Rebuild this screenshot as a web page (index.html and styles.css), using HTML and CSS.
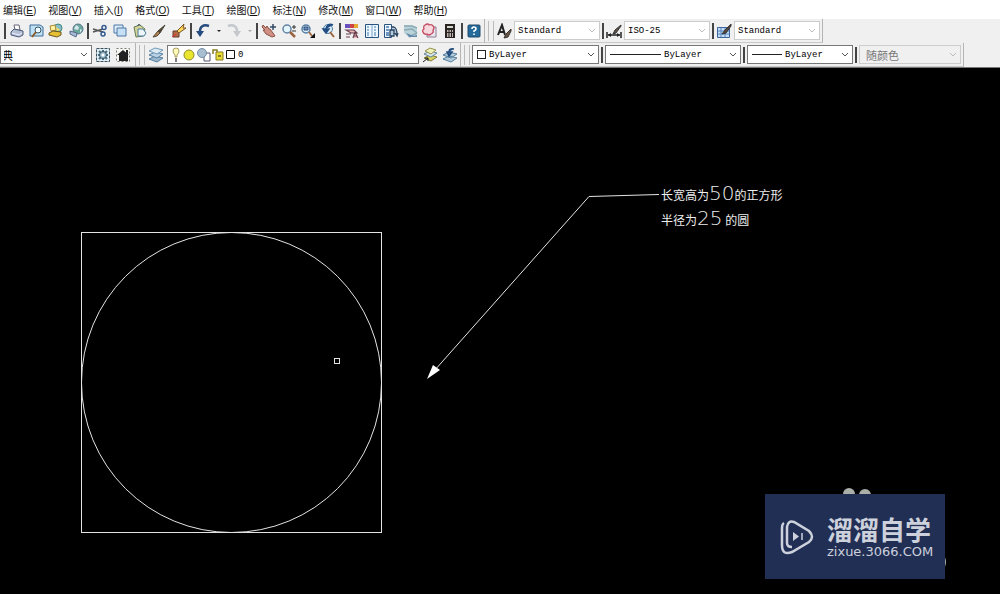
FILE: index.html
```html
<!DOCTYPE html>
<html lang="zh-CN">
<head>
<meta charset="utf-8">
<title>CAD</title>
<link rel="stylesheet" href="styles.css">
</head>
<body>
<nav class="menu">
<button>编辑(<u>E</u>)</button>
<button>视图(<u>V</u>)</button>
<button>插入(<u>I</u>)</button>
<button>格式(<u>O</u>)</button>
<button>工具(<u>T</u>)</button>
<button>绘图(<u>D</u>)</button>
<button>标注(<u>N</u>)</button>
<button>修改(<u>M</u>)</button>
<button>窗口(<u>W</u>)</button>
<button>帮助(<u>H</u>)</button>
</nav>

<div class="row">
<div class="bar bar-standard">
<i class="sep"></i>
<div class="tools">
<button aria-label="打印"><svg viewBox="0 0 16 16"><path d="M5 2h5l1 5H6z" fill="#fff" stroke="#667" /><path d="M2 9l3-3 9 2v4l-4 2-8-2z" fill="#b4bfd4" stroke="#4a5878"/><path d="M3 10l7 2 3-2" fill="none" stroke="#eef"/></svg></button>
<button aria-label="打印预览"><svg viewBox="0 0 16 16"><path d="M1 2h10l3 2v9H1z" fill="#bfe0f2" stroke="#3c6c9a"/><circle cx="9" cy="7" r="3" fill="#eef8ff" stroke="#356"/><path d="M7 9l-4 5" stroke="#8a5a2a" stroke-width="2"/></svg></button>
<button aria-label="发布"><svg viewBox="0 0 16 16"><circle cx="10" cy="5" r="4" fill="#86bccb" stroke="#487"/><path d="M2 3l5-1 1 5-5 1z" fill="#fff1a0" stroke="#a83"/><path d="M1 10l4-2 8 1v3l-4 2-8-2z" fill="#e6bf35" stroke="#67551e"/><path d="M8 4l4 3-3 1" fill="#ffe451"/></svg></button>
<button aria-label="三维打印"><svg viewBox="0 0 16 16"><circle cx="10" cy="6" r="5" fill="#6aa89b" stroke="#59778c"/><path d="M8 2l3 2-1 3-4-1zm4 4l2 1-2 3z" fill="#d6e8ed"/><path d="M2 8l7 2-1 4-6-3z" fill="#a9bad2" stroke="#536b8e"/></svg></button>
</div>
<i class="sep"></i>
<div class="tools tools-edit">
<button aria-label="剪切"><svg viewBox="0 0 16 16"><path d="M1 6l10 3M1 9l10-3" stroke="#555" stroke-width="1.5"/><circle cx="12" cy="4.500" r="2" fill="none" stroke="#345b91" stroke-width="1.500"/><circle cx="11" cy="11" r="2" fill="none" stroke="#345b91" stroke-width="1.500"/></svg></button>
<button aria-label="复制"><svg viewBox="0 0 16 16"><path d="M2 2h9v8H2z" fill="#ddebf7" stroke="#4c79a8"/><path d="M5 5h9v8H5z" fill="#c5e0f4" stroke="#4c79a8"/></svg></button>
<button aria-label="粘贴"><svg viewBox="0 0 16 16"><path d="M2 4l6-2 5 4-2 7-7 1z" fill="#d5d497" stroke="#607b55"/><path d="M6 6l5 0 3 4-2 3H6z" fill="#edf6fc" stroke="#497b98"/><path d="M5 3l2-2 2 2" fill="none" stroke="#567"/></svg></button>
<button aria-label="特性匹配"><svg viewBox="0 0 16 16"><path d="M14 2L7 8l2 2z" fill="#554337" stroke="#443"/><path d="M7 8l2 2-3 3-4 1z" fill="#b28251" stroke="#543"/></svg></button>
<button aria-label="块编辑器"><svg viewBox="0 0 16 16"><path d="M2 8h6v6H2z" fill="#b46a44" stroke="#653d31"/><path d="M6 8l7-7-1 4 3 0-7 5z" fill="#ffd75b" stroke="#7c5425"/><path d="M1 14l4-3" stroke="#d33"/></svg></button>
</div>
<i class="sep"></i>
<div class="tools tools-undo">
<button aria-label="放弃"><svg viewBox="0 0 16 16"><path d="M14 3C8 1 5 4 5 8" fill="none" stroke="#264b7e" stroke-width="2.500"/><path d="M1 8h8l-4 6z" fill="#264b7e"/></svg></button>
<button class="drop" aria-label="放弃列表"><svg viewBox="0 0 6 16"><path d="M1 7h4l-2 2z" fill="#222"/></svg></button>
<button aria-label="重做"><svg viewBox="0 0 16 16"><path d="M2 3c6-2 9 1 9 5" fill="none" stroke="#c4c8cc" stroke-width="2.500"/><path d="M7 8h8l-4 6z" fill="#c4c8cc"/></svg></button>
<button class="drop" aria-label="重做列表"><svg viewBox="0 0 6 16"><path d="M1 7h4l-2 2z" fill="#aaa"/></svg></button>
</div>
<i class="sep"></i>
<div class="tools">
<button aria-label="实时平移"><svg viewBox="0 0 16 16"><path d="M1 4l1-2 3 3 1-2 2 3 1 0 3 4 2 3-3 1-6-3-3-4 2 0z" fill="#cf8f82" stroke="#8d5148"/><path d="M12 1v6M9 4h6" stroke="#354964" stroke-width="1.500"/></svg></button>
<button aria-label="实时缩放"><svg viewBox="0 0 16 16"><circle cx="6" cy="6" r="4" fill="#e4f5fc" stroke="#6483a2" stroke-width="1.500"/><path d="M9 9l5 5" stroke="#9b6540" stroke-width="2.500"/><path d="M13 2v4M11 4h4M11 8h4" stroke="#333"/></svg></button>
<button aria-label="窗口缩放"><svg viewBox="0 0 16 16"><circle cx="6" cy="6" r="4" fill="#dceffa" stroke="#557da4" stroke-width="1.500"/><path d="M4 4h4v3H4z" fill="#7490b9" stroke="#254b76"/><path d="M9 9l3 4" stroke="#a56d43" stroke-width="2"/><path d="M15 10v5h-5z" fill="#111"/></svg></button>
<button aria-label="缩放上一个"><svg viewBox="0 0 16 16"><circle cx="8" cy="6" r="4.500" fill="#dceffa" stroke="#557da4"/><path d="M13 2C9 0 6 3 6 6M3 6h6l-3 4z" stroke="#234e84" stroke-width="1.500" fill="#234e84"/><path d="M10 9l4 5" stroke="#9a613b" stroke-width="2"/></svg></button>
</div>
<i class="sep"></i>
<div class="tools tools-palettes">
<button aria-label="特性"><svg viewBox="0 0 16 16"><path d="M1 1h5v4H1z" fill="#6b4fbe"/><path d="M6 1h4v4H6z" fill="#d04444"/><path d="M10 1h4v4h-4z" fill="#e5aa32"/><path d="M2 7h8l3 3H7zM2 11h5M2 14h4M9 15l2-6 3 6M10 13h3" fill="#e7b9b9" stroke="#693f4e" stroke-width="1.200"/></svg></button>
<button aria-label="设计中心"><svg viewBox="0 0 16 16"><path d="M1.500 1.500h13v13h-13z" fill="#edf7ff" stroke="#28527f"/><path d="M8 2v12" stroke="#7da0c4"/><path d="M3 4h3M10 4h3M3 7h3M10 7h3M3 10h3M10 10h3M3 12h3M10 12h3" stroke="#447ab0" stroke-width="1.200" stroke-dasharray="2 1"/></svg></button>
<button aria-label="工具选项板"><svg viewBox="0 0 16 16"><path d="M1.500 1.500h7v13h-7z" fill="#edf7ff" stroke="#28527f"/><path d="M3 4h3M3 7h3M3 10h3M3 12h3" stroke="#447ab0" stroke-width="1.500"/><path d="M8 4h3q3 1 3 8M12 10l2 3 1-3M7 7h4v6H7z" fill="#b9cde2" stroke="#29435f" stroke-width="1.300"/></svg></button>
<button aria-label="图纸集"><svg viewBox="0 0 16 16"><path d="M1 2h8l5 3v9H6L1 10z" fill="#bad3d8"/><path d="M1 3h8l5 2M1 7l8-1 5 4M6 14l8-4" fill="none" stroke="#8aabb5" stroke-width="1.500"/><path d="M3 10l8 3 3-1v2H6z" fill="#648bae"/></svg></button>
<button aria-label="标记集"><svg viewBox="0 0 16 16"><path d="M5 4h9v10H5z" fill="#e9e8f0" stroke="#8c7e92"/><path d="M3 2q3-2 4 0 3-1 4 1 2 2 0 4 1 3-2 4-2 2-4 0-3 1-4-2-1-2 1-3-1-3 1-4z" fill="#f6d9df" stroke="#c34b62" stroke-width="1.300"/></svg></button>
<button aria-label="计算器"><svg viewBox="0 0 16 16"><path d="M3 1h10v14H3z" fill="#292321"/><path d="M5 3h6v2H5z" fill="#d3d9ca"/><path d="M5 8h6M5 11h6M5 13h6" stroke="#ede6dc" stroke-width="1.500" stroke-dasharray="1.500 1"/></svg></button>
</div>
<i class="sep"></i>
<div class="tools tools-one">
<button aria-label="帮助"><svg viewBox="0 0 16 16"><rect x="2" y="2" width="12" height="12" rx="1" fill="#246b9c" stroke="#234a6b"/><path d="M6 6q0-2 2-2t2 2q0 1-2 2v1M8 10.500v1.500" fill="none" stroke="#fff" stroke-width="1.600"/></svg></button>
</div>
</div>
<div class="bar bar-tight">
<i class="grip"></i>
<button aria-label="文字样式"><svg viewBox="0 0 16 16"><path d="M2 12L6 2l3 10M3 9h5" fill="none" stroke="#222" stroke-width="2"/><path d="M15 6l-5 5-2 4 4-1 3-6z" fill="#705744" stroke="#333"/></svg></button>
<label class="combo combo-soft w-style"><select aria-label="文字样式"><option>Standard</option></select></label>
<i class="sep"></i>
<button aria-label="标注样式"><svg viewBox="0 0 16 16"><path d="M1 9v6M15 9v6M2 12h12" stroke="#222" stroke-width="1.500"/><path d="M2 12l3-2v4zM14 12l-3-2v4z" fill="#222"/><path d="M15 2L9 7l-2 4 3-1 5-7z" fill="#625348" stroke="#333"/></svg></button>
<label class="combo combo-soft w-style"><select aria-label="标注样式"><option>ISO-25</option></select></label>
<i class="sep"></i>
<button aria-label="表格样式"><svg viewBox="0 0 16 16"><path d="M1.500 4.500h12v10h-12z" fill="#c4dcf6" stroke="#3b659c"/><path d="M2 8h11M2 11h11M5 5v9M9 5v9" stroke="#5683bd"/><path d="M15 1L9 7l-3 4 4-1 5-7z" fill="#59473a" stroke="#333"/></svg></button>
<label class="combo combo-soft w-style"><select aria-label="表格样式"><option>Standard</option></select></label>
</div>
</div>

<div class="row row-second">
<div class="bar bar-workspace">
<label class="combo w-workspace"><select class="cjk" aria-label="工作空间"><option>经典</option></select></label>
<div class="tools tools-two">
<button aria-label="工作空间设置"><svg viewBox="0 0 16 16"><path d="M1.500 1.500h13v13h-13z" fill="#e2eef2" stroke="#354f5f" stroke-dasharray="3 1"/><path d="M8 3v10M3 8h10M4 4l8 8M12 4l-8 8" stroke="#476c80" stroke-width="2"/><circle cx="8" cy="8" r="3.500" fill="#9ebccb" stroke="#355366"/><circle cx="8" cy="8" r="1.500" fill="#fff"/></svg></button>
<button aria-label="我的工作空间"><svg viewBox="0 0 16 16"><path d="M1.500 1.500h13v13h-13z" fill="#f6f6f2" stroke="#77796f" stroke-dasharray="2 2"/><path d="M2 8l6-5 6 5h-1v6H4V8z" fill="#222"/><path d="M11 3h2v4h-2z" fill="#222"/></svg></button>
</div>
</div>
<div class="bar">
<i class="grip"></i>
<button aria-label="图层特性"><svg viewBox="0 0 16 16"><path d="M1 12l6-3 8 2-6 4z" fill="#9bb7cd" stroke="#567f9f"/><path d="M1 8l6-3 8 2-6 4z" fill="#b9d1e2" stroke="#567f9f"/><path d="M1 4l6-3 8 2-6 4z" fill="#dcebf4" stroke="#7199b5"/></svg></button>
<label class="combo w-layers">
<svg class="layer-state" viewBox="0 0 64 16"><path d="M4 10V8Q2 6 2 4q0-3 3-3t3 3q0 2-2 4v2z" fill="#fff9b8" stroke="#a79c61"/><path d="M4 12h2M4 14h2" stroke="#555" stroke-width="1.500"/><circle cx="18" cy="8" r="5" fill="#e9e52f" stroke="#908b2c"/><path d="M33 6h6v8h-6z" fill="#fff" stroke="#557"/><circle cx="31" cy="6" r="4.500" fill="#a8bfd1" stroke="#718da7"/><path d="M42 7V3h4v3" fill="none" stroke="#877b24" stroke-width="1.500"/><path d="M45 5h7v8h-7z" fill="#eadd36" stroke="#877b24"/><path d="M47 8h3v2h-3z" fill="#877b24" /><path d="M55.500 3.500h8v8h-8z" fill="#fff" stroke="#111"/></svg>
<select aria-label="图层"><option>0</option></select></label>
<div class="tools tools-two">
<button aria-label="置为当前"><svg viewBox="0 0 16 16"><path d="M2 11l6-3 7 2-6 4z" fill="#d6d362" stroke="#827d35"/><path d="M2 7l6-3 7 2-6 4z" fill="#d7e7ed" stroke="#64849a"/><path d="M3 4l5-3 6 2-5 4z" fill="#eef2ba" stroke="#96934e"/><path d="M1 15l5-4M3 11h3v3" fill="none" stroke="#222"/></svg></button>
<button aria-label="上一个图层"><svg viewBox="0 0 16 16"><path d="M1 12l6-3 8 2-6 4zM1 8l6-3 8 2-6 4z" fill="#b1cbdc" stroke="#567f9f"/><path d="M12 2Q7 1 7 5M5 5h5l-3 4z" fill="#31659a" stroke="#244d7e" stroke-width="1.500"/></svg></button>
</div>
</div>
<div class="bar bar-tight">
<i class="grip"></i>
<label class="combo w-color"><i class="swatch"></i><select aria-label="颜色"><option>ByLayer</option></select></label>
<i class="sep"></i>
<label class="combo w-linetype"><i class="line line-long"></i><select aria-label="线型"><option>ByLayer</option></select></label>
<i class="sep"></i>
<label class="combo w-weight"><i class="line"></i><select aria-label="线宽"><option>ByLayer</option></select></label>
<i class="sep"></i>
<label class="combo combo-soft combo-off w-plot"><select class="cjk" aria-label="打印样式" disabled><option>随颜色</option></select></label>
</div>
</div>

<main class="canvas">
<svg class="drawing" aria-label="图形">
<g fill="none" stroke="#e4e4e4">
<rect x="81.500" y="164.500" width="300" height="300"/>
<circle cx="231.500" cy="314.500" r="150"/>
<rect x="334.500" y="290.500" width="5" height="5"/>
<path d="M659 126.500L589 128.500L434 303"/>
</g>
<path d="M427 311l6-14 7 5z" fill="#fff"/>
<text class="note" x="661" y="132">长宽高为<tspan class="digits">50</tspan>的正方形</text>
<text class="note" x="661" y="157">半径为<tspan class="digits">25</tspan> 的圆</text>
</svg>
<div class="watermark">
<svg class="behind" viewBox="0 0 190 90"><circle cx="84" cy="6" r="6"/><circle cx="100" cy="7" r="6"/><ellipse cx="178" cy="74" rx="3" ry="6"/></svg>
<div class="brand">
<svg class="logo" viewBox="0 0 36 38"><path d="M5 5Q3 6 3 10V27Q3 38 13 34L30 24Q36 19 30 13L15 4Q9 2 8 9V25Q8 29 13 29" fill="none" stroke="#ccd1dc" stroke-width="2.500"/><path d="M14 14l6 4.500-6 4.500z" fill="#ccd1dc"/><path d="M23 15v7" stroke="#ccd1dc" stroke-width="1.500"/></svg>
<div class="brand-text"><strong>溜溜自学</strong><span>zixue.3066.COM</span></div>
</div>
</div>
</main>
</body>
</html>
```
FILE: styles.css
```css
* {
  box-sizing: border-box;
}

body {
  margin: 0;
  min-height: 100vh;
  display: flex;
  flex-direction: column;
  background: #f0f0f0;
  font-family: "Liberation Sans", "Noto Sans CJK SC", sans-serif;
  font-size: 10px;
  color: #111;
  overflow-x: hidden;
}

button {
  padding: 0;
  border: 0;
  background: none;
  color: inherit;
  font: inherit;
  flex: none;
}

.menu {
  display: flex;
  gap: 12px;
  height: 19px;
  padding-left: 3px;
  background: #fff;
  white-space: nowrap;
}

.row {
  display: flex;
  height: 24px;
}

.row-second {
  height: 25px;
  border-bottom: 1px solid #777;
}

.bar {
  display: flex;
  align-items: center;
  gap: 3px;
  flex: none;
  padding-right: 2px;
  border-right: 1px solid #b4b4b4;
  border-bottom: 1px solid #c8c8c8;
}

.bar-tight {
  gap: 2px;
}

.bar-standard {
  padding-left: 4px;
  padding-right: 1px;
}

.bar svg {
  display: block;
  height: 16px;
}

.bar button svg {
  width: 100%;
}

.bar button {
  width: 16px;
  height: 16px;
}

.bar .drop {
  width: 6px;
}

.tools {
  display: flex;
  justify-content: space-between;
  width: 75px;
}

.tools-edit { width: 95px; }
.tools-undo { width: 58px; }
.tools-palettes { width: 114px; }
.tools-one { width: 17px; }
.tools-two { width: 36px; }

.sep {
  width: 2px;
  height: 16px;
  background: #444;
}

.grip {
  width: 6px;
  height: 20px;
  margin-left: 3px;
  border: solid #bbb;
  border-width: 0 1px;
}

.combo {
  display: flex;
  align-items: center;
  height: 19px;
  overflow: hidden;
  background: #fff;
  border: 1px solid #777;
}

.combo-soft {
  border-color: #ccc;
}

.combo select {
  flex: 1;
  min-width: 0;
  height: 100%;
  padding: 0 16px 0 3px;
  border: 0;
  appearance: none;
  color: #000;
  font-family: "Liberation Mono", monospace;
  font-size: 9px;
  background: url("data:image/svg+xml,%3Csvg xmlns='http://www.w3.org/2000/svg' width='8' height='5'%3E%3Cpath d='M1 1l3 3 3-3' fill='none' stroke='%23555'/%3E%3C/svg%3E") no-repeat right 3px center;
}

.combo-soft select {
  background-image: url("data:image/svg+xml,%3Csvg xmlns='http://www.w3.org/2000/svg' width='8' height='5'%3E%3Cpath d='M1 1l3 3 3-3' fill='none' stroke='%23bbb'/%3E%3C/svg%3E");
}

.combo .cjk {
  font-family: "Noto Sans CJK SC", sans-serif;
  font-size: 11px;
}

.combo-off,
.combo-off select.cjk {
  background-color: #f0f0f0;
  color: #777;
  opacity: 1;
}

.combo-off select.cjk {
  padding-left: 6px;
}

.w-style { width: 86px; }
.w-workspace { width: 92px; }
.w-layers { width: 252px; }
.w-color { width: 127px; }
.w-linetype { width: 136px; }
.w-weight { width: 106px; }
.w-plot { width: 102px; }

.w-workspace select {
  text-indent: -13px;
}

.bar-workspace {
  padding-right: 4px;
}

.layer-state {
  width: 64px;
  margin-left: 3px;
}

.swatch {
  width: 9px;
  height: 9px;
  margin-left: 4px;
  border: 1px solid #222;
}

.line {
  width: 30px;
  height: 1px;
  margin-left: 4px;
  background: #222;
}

.line-long {
  width: 51px;
}

.canvas {
  position: relative;
  flex: 1;
  min-height: 500px;
  background: #000;
}

.drawing {
  position: absolute;
  inset: 0;
  width: 100%;
  height: 100%;
}

.note {
  fill: #eee;
  font-family: "Noto Sans CJK SC", sans-serif;
  font-size: 12px;
}

.digits {
  font-family: "DejaVu Sans Light", "DejaVu Sans", sans-serif;
  font-weight: 200;
  font-size: 20px;
}

.watermark {
  position: absolute;
  right: 55px;
  bottom: 15px;
}

.behind {
  position: absolute;
  left: 0;
  top: -6px;
  width: 190px;
  fill: #aab0a8;
}

.brand {
  position: relative;
  display: flex;
  align-items: center;
  gap: 12px;
  width: 180px;
  height: 85px;
  padding-left: 14px;
  background: #222f55;
  color: #ccd1dc;
}

.logo {
  width: 36px;
  height: 38px;
}

.brand-text {
  display: flex;
  flex-direction: column;
  font-family: "DejaVu Sans", "Noto Sans CJK SC", sans-serif;
}

.brand-text strong {
  font-family: "Noto Sans CJK SC", sans-serif;
  font-size: 26px;
  line-height: 30px;
}

.brand-text span {
  font-size: 13px;
  line-height: 16px;
}
```
